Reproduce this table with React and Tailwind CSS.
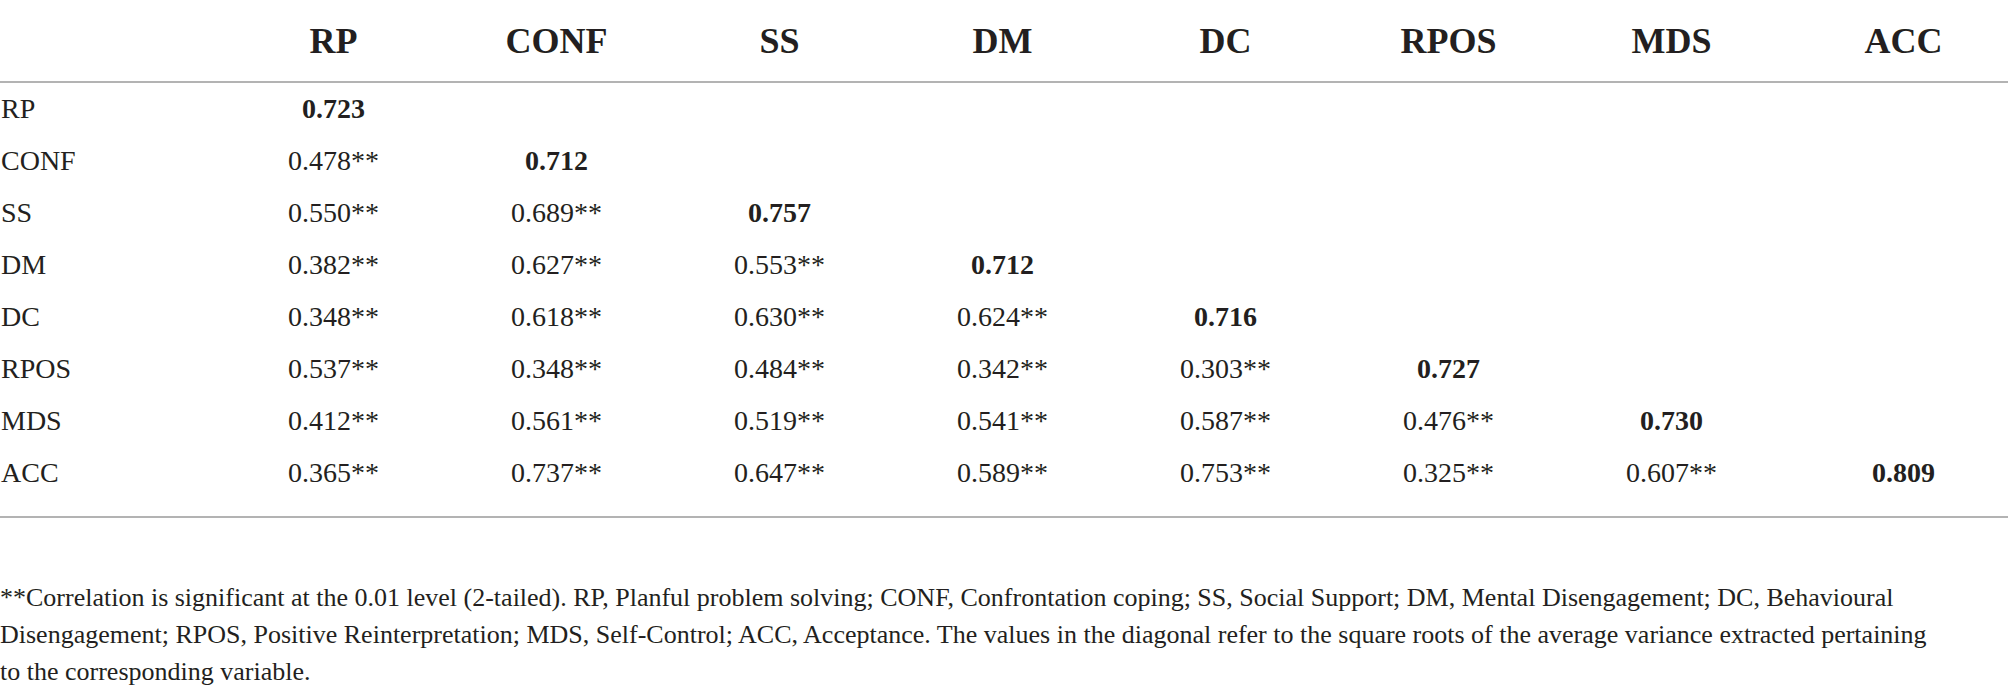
const COLS = ['RP', 'CONF', 'SS', 'DM', 'DC', 'RPOS', 'MDS', 'ACC'];

// lower triangle, last value in each row is the diagonal (sqrt AVE)
const ROWS = [
  ['RP',   ['0.723']],
  ['CONF', ['0.478**', '0.712']],
  ['SS',   ['0.550**', '0.689**', '0.757']],
  ['DM',   ['0.382**', '0.627**', '0.553**', '0.712']],
  ['DC',   ['0.348**', '0.618**', '0.630**', '0.624**', '0.716']],
  ['RPOS', ['0.537**', '0.348**', '0.484**', '0.342**', '0.303**', '0.727']],
  ['MDS',  ['0.412**', '0.561**', '0.519**', '0.541**', '0.587**', '0.476**', '0.730']],
  ['ACC',  ['0.365**', '0.737**', '0.647**', '0.589**', '0.753**', '0.325**', '0.607**', '0.809']],
];

const grid = "grid grid-cols-[222px_repeat(7,223px)_1fr]";

export default function App() {
  return (
    <div className="w-full h-[694px] bg-white text-[#231f20] overflow-hidden" style={{ fontFamily: '"Liberation Serif", "Times New Roman", serif' }}>

      {/* Header */}
      <div className={`${grid} h-[83px] items-center border-b-2 border-[#b3b3b3]`}>
        <div />
        {COLS.map((c, i) => (
          <div key={c} className={`text-center text-[36px] font-bold ${i === 7 ? 'pl-4' : ''}`}>{c}</div>
        ))}
      </div>

      {/* Body */}
      <div className="pb-[17px] border-b-2 border-[#b3b3b3]">
        {ROWS.map(([label, vals]) => (
          <div key={label} className={`${grid} h-[52px] items-center text-[28px] leading-[52px]`}>
            <div className="pl-px">{label}</div>
            {COLS.map((c, i) => {
              const v = vals[i];
              const diag = i === vals.length - 1;
              return (
                <div key={c} className={`text-center ${diag ? 'font-bold' : ''} ${i === 7 ? 'pl-4' : ''}`}>{v || ''}</div>
              );
            })}
          </div>
        ))}
      </div>

      {/* Footnote */}
      <p className="mt-[61px] pr-[16px] text-[26px] leading-[37px]">
        **Correlation is significant at the 0.01 level (2-tailed). RP, Planful problem solving; CONF, Confrontation coping; SS, Social Support; DM, Mental Disengagement; DC, Behavioural Disengagement; RPOS, Positive Reinterpretation; MDS, Self-Control; ACC, Acceptance. The values in the diagonal refer to the square roots of the average variance extracted pertaining<br />
        to the corresponding variable.
      </p>
    </div>
  );
}
